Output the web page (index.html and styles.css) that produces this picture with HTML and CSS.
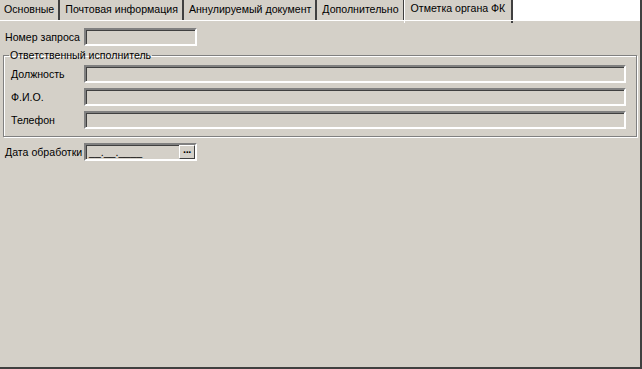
FILE: index.html
```html
<html lang="ru">
<head>
    <meta charset="UTF-8">
    <title>Отметка органа ФК</title>
    <link rel="stylesheet" href="styles.css">
</head>
<body>
    <div class="window">
        <div class="tabs">
            <div class="tab">Основные</div>
            <div class="tab">Почтовая информация</div>
            <div class="tab">Аннулируемый документ</div>
            <div class="tab">Дополнительно</div>
            <div class="tab active">Отметка органа ФК</div>
            <div class="tab-rest"></div>
        </div>

        <div class="page">
            <div class="row">
                <label class="label">Номер запроса</label>
                <div class="field short"></div>
            </div>

            <fieldset class="group">
                <legend>Ответственный исполнитель</legend>
                <div class="row">
                    <label class="label inner">Должность</label>
                    <div class="field wide"></div>
                </div>
                <div class="row">
                    <label class="label inner">Ф.И.О.</label>
                    <div class="field wide"></div>
                </div>
                <div class="row">
                    <label class="label inner">Телефон</label>
                    <div class="field wide"></div>
                </div>
            </fieldset>

            <div class="row date-row">
                <label class="label">Дата обработки</label>
                <div class="field short date">
                    <span class="mask">__.__.____</span>
                    <button class="dots">&middot;&middot;&middot;</button>
                </div>
            </div>
        </div>
    </div>
</body>
</html>
```

FILE: styles.css
```css
body {
    margin: 0;
    background-color: #d4d0c8;
    font-family: 'Liberation Sans', Arial, sans-serif;
    font-size: 10.6px;
    color: #000000;
}

.window {
    width: 640px;
    height: 367px;
    border-right: 2px solid #404040;
    border-bottom: 2px solid #404040;
    display: flex;
    flex-direction: column;
}

/* Tab strip along the top */
.tabs {
    display: flex;
    height: 21px;
    align-items: stretch;
}

.tab {
    padding: 3px 4px 0 4px;
    border-right: 2px solid #404040;
    margin-right: 1px;
    white-space: nowrap;
    height: 18px;
}

.tab.active {
    padding: 2px 6px 0 6px;
    border-left: 1px solid #ffffff;
    margin-left: -2px;
    height: 21px;
}

.tab-rest {
    flex: 1;
    background-color: #ffffff;
    height: 20px;
    margin-left: -1px;
}

.page {
    flex: 1;
    padding: 4px 4px 0 4px;
    border-top: 1px solid #ffffff;
    margin-top: -1px;
}

.row {
    display: flex;
    align-items: center;
    height: 23px;
}

.date-row {
    margin-top: 3px;
}

.label {
    box-sizing: border-box;
    width: 80px;
    padding-left: 1px;
    white-space: nowrap;
}

.label.inner {
    width: 75px;
    padding-left: 2px;
}

/* Sunken, disabled edit box */
.field {
    height: 14px;
    border-top: 2px solid #808080;
    border-left: 2px solid #808080;
    border-bottom: 2px solid #ffffff;
    border-right: 2px solid #ffffff;
    box-shadow: inset 1px 1px 0 #404040, inset -1px -1px 0 #d4d0c8;
    background-color: #d4d0c8;
    position: relative;
}

.field.short {
    width: 109px;
}

.field.wide {
    width: 538px;
}

.group {
    margin: 1px 0 0 -1px;
    padding: 0 5px 5px 5px;
    width: 622px;
    border: 1px solid #808080;
    box-shadow: 1px 1px 0 #ffffff, inset 1px 1px 0 #ffffff;
}

.group legend {
    padding: 0 1px;
    margin-left: 0;
    line-height: 13px;
}

.date .mask {
    position: absolute;
    left: 3px;
    top: 0;
    line-height: 14px;
}

.dots {
    position: absolute;
    right: 0;
    top: 0;
    width: 16px;
    height: 14px;
    padding: 0;
    margin: 0;
    background-color: #d4d0c8;
    border-top: 1px solid #ffffff;
    border-left: 1px solid #ffffff;
    border-right: 1px solid #404040;
    border-bottom: 1px solid #404040;
    font-family: 'Liberation Sans', Arial, sans-serif;
    font-size: 11px;
    font-weight: bold;
    line-height: 10px;
    letter-spacing: -1px;
}
```
